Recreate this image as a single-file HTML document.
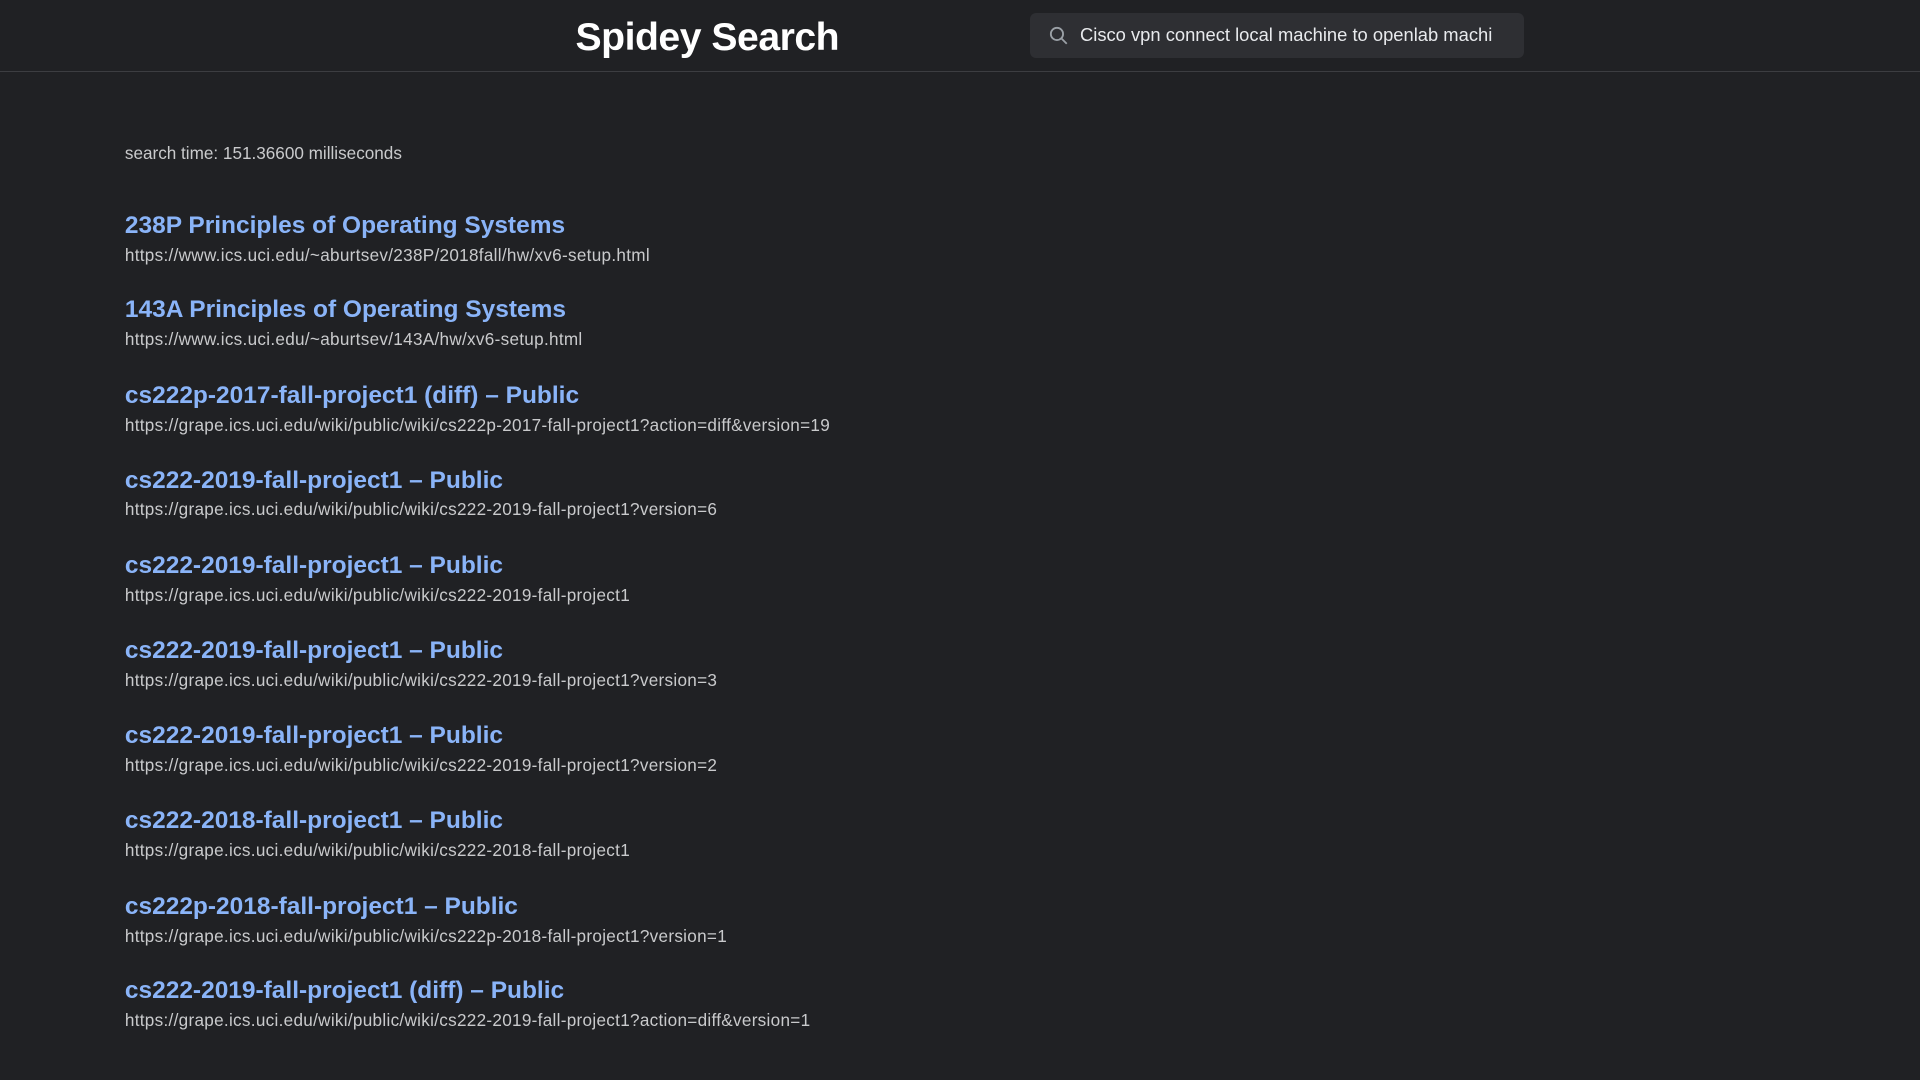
<!DOCTYPE html>
<html><head><meta charset="utf-8">
<style>
html,body{margin:0;padding:0;background:#202124;}
body{width:1568px;height:882px;zoom:1.22449;font-family:"Liberation Sans",sans-serif;overflow:hidden;position:relative;}
.hdr{position:absolute;left:0;top:0;width:1568px;height:58px;border-bottom:1px solid #3c3d41;}
.title{position:absolute;left:470px;top:13px;font-size:32px;font-weight:bold;color:#fff;letter-spacing:-0.4px;}
.sb{position:absolute;left:841px;top:11px;width:404px;height:36px;background:#2e2f33;border-radius:5px;}
.sb svg{position:absolute;left:16px;top:10px;}
.sb span{position:absolute;left:41px;top:9px;font-size:15px;color:#e8eaed;white-space:nowrap;}
.time{position:absolute;left:102px;top:117px;font-size:14px;color:#c9cacc;}
.r{position:absolute;left:102px;}
.r a{display:block;font-size:20px;font-weight:bold;color:#8ab4f8;text-decoration:none;letter-spacing:0px;}
.r div{font-size:14px;color:#c9cacc;margin-top:4px;letter-spacing:0.24px;}
</style></head><body>
<div class="hdr">
<div class="title">Spidey Search</div>
<div class="sb"><svg width="16" height="16" viewBox="0 0 16 16"><circle cx="6.5" cy="6.5" r="5" fill="none" stroke="#9aa0a6" stroke-width="1.5"/><line x1="10.2" y1="10.2" x2="14.5" y2="14.5" stroke="#9aa0a6" stroke-width="1.5"/></svg><span>Cisco vpn connect local machine to openlab machi</span></div>
</div>
<div class="time">search time: 151.36600 milliseconds</div>
<div class="r" style="top:173px"><a>238P Principles of Operating Systems</a><div>https://www.ics.uci.edu/~aburtsev/238P/2018fall/hw/xv6-setup.html</div></div>
<div class="r" style="top:242px"><a>143A Principles of Operating Systems</a><div>https://www.ics.uci.edu/~aburtsev/143A/hw/xv6-setup.html</div></div>
<div class="r" style="top:312px"><a>cs222p-2017-fall-project1 (diff) – Public</a><div>https://grape.ics.uci.edu/wiki/public/wiki/cs222p-2017-fall-project1?action=diff&amp;version=19</div></div>
<div class="r" style="top:381px"><a>cs222-2019-fall-project1 – Public</a><div>https://grape.ics.uci.edu/wiki/public/wiki/cs222-2019-fall-project1?version=6</div></div>
<div class="r" style="top:451px"><a>cs222-2019-fall-project1 – Public</a><div>https://grape.ics.uci.edu/wiki/public/wiki/cs222-2019-fall-project1</div></div>
<div class="r" style="top:520px"><a>cs222-2019-fall-project1 – Public</a><div>https://grape.ics.uci.edu/wiki/public/wiki/cs222-2019-fall-project1?version=3</div></div>
<div class="r" style="top:590px"><a>cs222-2019-fall-project1 – Public</a><div>https://grape.ics.uci.edu/wiki/public/wiki/cs222-2019-fall-project1?version=2</div></div>
<div class="r" style="top:659px"><a>cs222-2018-fall-project1 – Public</a><div>https://grape.ics.uci.edu/wiki/public/wiki/cs222-2018-fall-project1</div></div>
<div class="r" style="top:729px"><a>cs222p-2018-fall-project1 – Public</a><div>https://grape.ics.uci.edu/wiki/public/wiki/cs222p-2018-fall-project1?version=1</div></div>
<div class="r" style="top:798px"><a>cs222-2019-fall-project1 (diff) – Public</a><div>https://grape.ics.uci.edu/wiki/public/wiki/cs222-2019-fall-project1?action=diff&amp;version=1</div></div>
</body></html>
